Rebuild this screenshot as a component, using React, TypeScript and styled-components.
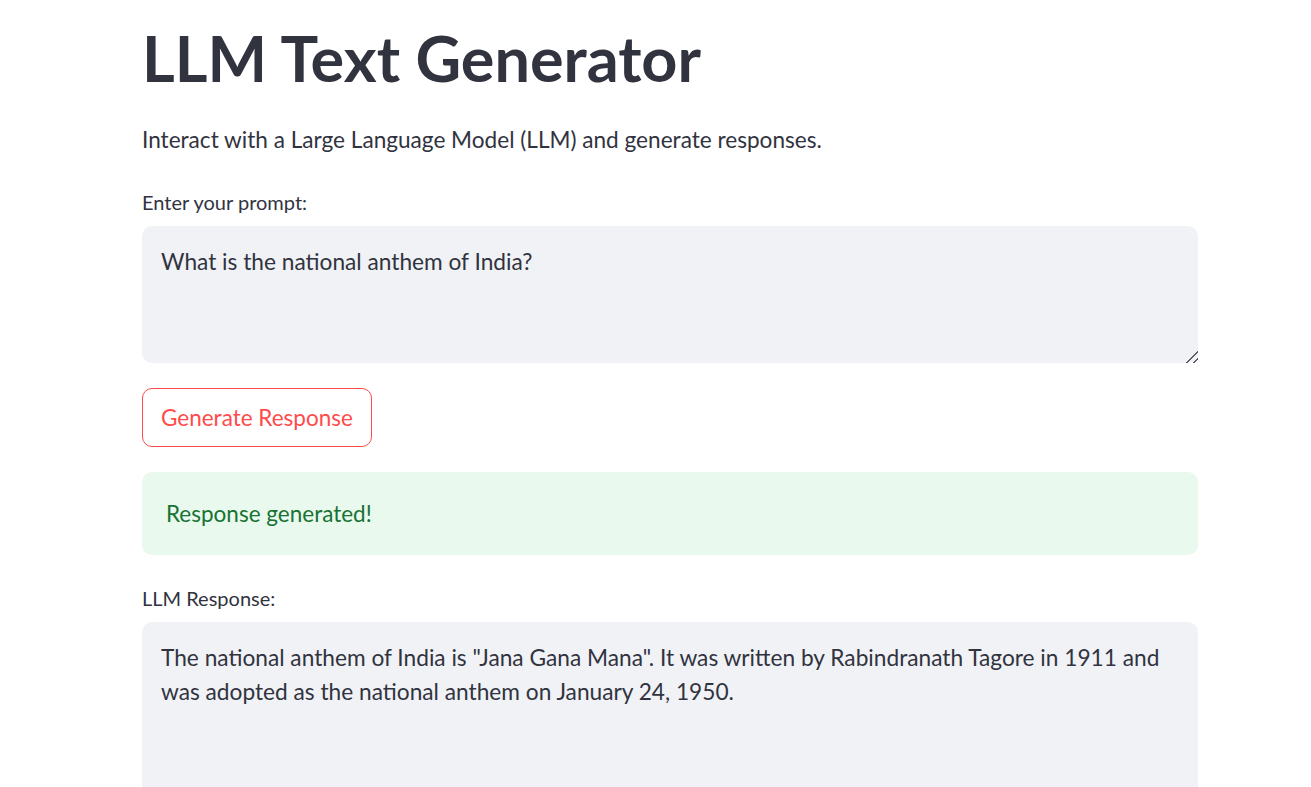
import React from 'react'
import styled, { createGlobalStyle } from 'styled-components'

const GlobalStyle = createGlobalStyle`
  body {
    margin: 0;
    background: #ffffff;
    font-family: Lato, "Noto Sans", sans-serif;
    color: #31333f;
    overflow: hidden;
  }
`

const App = () => {
  return (
    <>
      <GlobalStyle />
      <Page>
        <Title>LLM Text Generator</Title>
        <Intro>Interact with a Large Language Model (LLM) and generate responses.</Intro>

        <Label>Enter your prompt:</Label>
        <TextArea defaultValue="What is the national anthem of India?" rows={3} />

        <Button>Generate Response</Button>

        <Success>Response generated!</Success>

        <Label>LLM Response:</Label>
        <TextArea
          readOnly
          tall
          defaultValue={
            'The national anthem of India is "Jana Gana Mana". It was written by Rabindranath Tagore in 1911 and was adopted as the national anthem on January 24, 1950.'
          }
        />
      </Page>
    </>
  )
}

export default App

const Page = styled.main`
  width: 1056px;
  margin-left: 142px;
  padding-top: 22px;
  display: flex;
  flex-direction: column;
  align-items: flex-start;
`

const Title = styled.h1`
  margin: 0 0 30px;
  font-size: 63px;
  line-height: 72px;
  font-weight: 700;
  color: #31333f;
`

const Intro = styled.p`
  margin: 0 0 34px;
  font-size: 22.6px;
  line-height: 32px;
`

const Label = styled.label`
  font-size: 20px;
  line-height: 24px;
  margin-bottom: 12px;
`

const TextArea = styled.textarea<{ tall?: boolean }>`
  width: 100%;
  height: ${(p) => (p.tall ? '200px' : '137px')};
  flex-shrink: 0;
  box-sizing: border-box;
  border: none;
  outline: none;
  border-radius: 10px;
  background: #f0f2f6;
  padding: 19px 19px 18px;
  font-family: Lato, "Noto Sans", sans-serif;
  font-size: 22.7px;
  line-height: 34px;
  color: #31333f;
  resize: ${(p) => (p.tall ? 'none' : 'vertical')};

  &::-webkit-resizer {
    background:
      linear-gradient(135deg, transparent 46%, #5a5c66 46%, #5a5c66 56%, transparent 56%) no-repeat 3px 3px / 12px 12px,
      linear-gradient(135deg, transparent 46%, #5a5c66 46%, #5a5c66 60%, transparent 60%) no-repeat 9px 9px / 7px 7px;
  }
`

const Button = styled.button`
  margin-top: 25px;
  height: 59px;
  flex-shrink: 0;
  padding: 0 18px;
  border: 1px solid #ff4b4b;
  border-radius: 10px;
  background: #ffffff;
  color: #ff4b4b;
  font-family: Lato, "Noto Sans", sans-serif;
  font-size: 22.5px;
  cursor: pointer;
`

const Success = styled.div`
  margin: 25px 0 31px;
  width: 100%;
  height: 83px;
  flex-shrink: 0;
  box-sizing: border-box;
  display: flex;
  align-items: center;
  padding: 0 24px;
  border-radius: 10px;
  background: #e9f9ee;
  color: #177233;
  font-size: 22.5px;
`
